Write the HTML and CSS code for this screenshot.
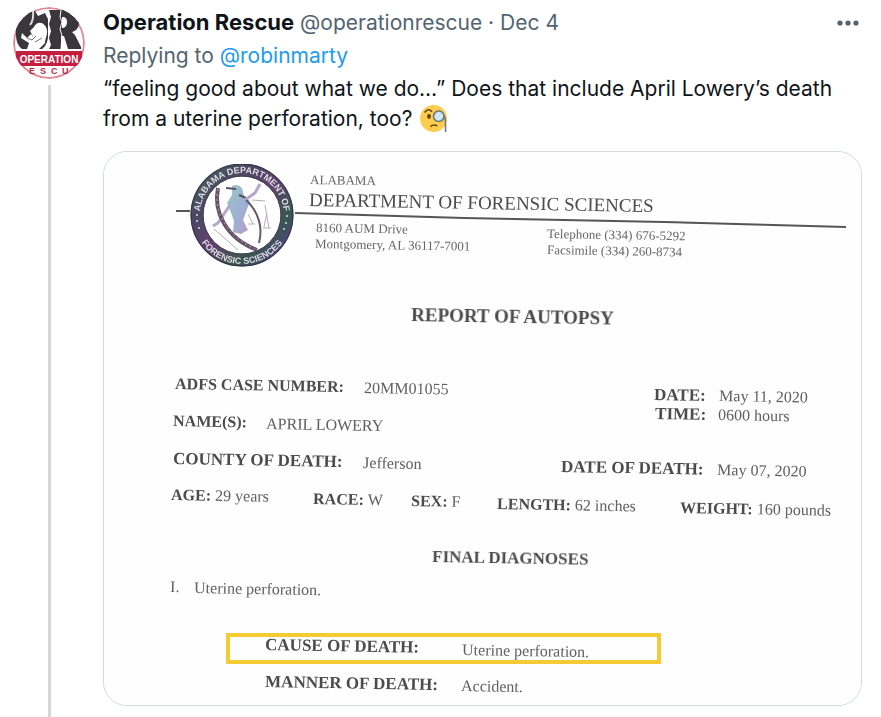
FILE: index.html
```html
<!DOCTYPE html>
<html lang="en">
<head>
<meta charset="utf-8">
<meta name="viewport" content="width=device-width, initial-scale=1">
<title>Operation Rescue</title>
<link rel="stylesheet" href="styles.css">
</head>
<body>
<article class="post">
  <div class="rail">
    <svg class="avatar" viewBox="0 0 72 72" aria-hidden="true">
      <defs><clipPath id="disc"><circle cx="36" cy="36" r="36"/></clipPath></defs>
      <g clip-path="url(#disc)">
        <rect width="72" height="72" fill="#fff"/>
        <circle cx="36" cy="36" r="35" fill="none" stroke="#e08a9a" stroke-width="2"/>
        <path d="M16 5C6 10 2 19 3 28C3 34 5 39 9 42H29C33 39 35 34 35 29V12L32 6L25 9L22 4Z" fill="#393739"/>
        <path d="M36 3H53C62 3 66 8 66 15C66 21 63 24 59 25L62 28L68 40V42H55L51 29H48V42H36L38 38L36 31L38 24L36 17L38 10Z" fill="#393739"/>
        <path d="M48 3L47 10L49 15L47 22L49 29L48 42" fill="none" stroke="#fff" stroke-width="1"/>
        <path d="M49 10H51Q54 11 54 15Q54 20 50 21H49Z" fill="#fff"/>
        <path d="M20 4Q21 13 17 18" fill="none" stroke="#ddd" stroke-width="2"/>
        <path d="M21 20C24 14 30 15 33 20C36 26 32 31 32 36L26 42H14L16 36L8 31L9 26L14 31L18 27L21 31L17 24Z" fill="#fff"/>
        <path d="M14 31L19 33L23 29M22 35L29 31" fill="none" stroke="#777" stroke-width="1"/>
        <rect x="3" y="44" width="66" height="15" fill="#c51f3f"/>
        <text class="logo-name" x="36" y="56" text-anchor="middle">OPERATION</text>
        <text class="logo-sub" x="16" y="67">E</text>
        <text class="logo-sub" x="27" y="67">S</text>
        <text class="logo-sub" x="38" y="67">C</text>
        <text class="logo-sub" x="49" y="67">U</text>
      </g>
    </svg>
    <div class="thread"></div>
  </div>
  <div class="content">
    <header class="head">
      <p class="byline"><a class="name" href="#">Operation Rescue</a> <a class="muted" href="#">@operationrescue</a> <span class="muted">·</span> <time class="muted">Dec 4</time></p>
      <button class="more" type="button" aria-label="More">
        <svg class="dots" viewBox="0 0 24 8" aria-hidden="true"><circle cx="4" cy="4" r="2.6"/><circle cx="12" cy="4" r="2.6"/><circle cx="20" cy="4" r="2.6"/></svg>
      </button>
    </header>
    <p class="reply">Replying to <a class="link" href="#">@robinmarty</a></p>
    <p class="message">“feeling good about what we do…” Does that include April Lowery’s death from a uterine perforation, too?
      <svg class="emoji" viewBox="0 0 36 36" aria-hidden="true">
        <circle cx="18" cy="18" r="18" fill="#ffcc4d"/>
        <path d="M6 10Q11 3 16 9" fill="none" stroke="#65471b" stroke-width="2"/>
        <ellipse cx="12" cy="15" rx="2.5" ry="3.5" fill="#664500"/>
        <path d="M14 29Q18 25 23 28" fill="none" stroke="#664500" stroke-width="2"/>
        <circle cx="25" cy="15" r="7" fill="#bdddf4" stroke="#66757f" stroke-width="2"/>
        <path d="M20 17L27 10M23 20L30 13" stroke="#e9f5fc" stroke-width="2"/>
        <path d="M32 14Q34 16 34 21V36" fill="none" stroke="#66757f" stroke-width="2"/>
      </svg>
    </p>
    <figure class="media">
      <svg class="scan" viewBox="0 0 757 553" role="img" aria-label="Report of Autopsy">
        <defs>
          <filter id="soft" x="0" y="0" width="1" height="1"><feGaussianBlur stdDeviation="0.5"/></filter>
          <linearGradient id="ring" x1="0" y1="0" x2="1" y2="1">
            <stop offset="0" stop-color="#476560"/><stop offset=".25" stop-color="#4b4764"/><stop offset=".5" stop-color="#634070"/><stop offset=".75" stop-color="#385750"/><stop offset="1" stop-color="#54408a"/>
          </linearGradient>
          <linearGradient id="figure" x1="0" y1="0" x2="1" y2="1">
            <stop offset="0" stop-color="#9bc8bd"/><stop offset=".5" stop-color="#9bb3d4"/><stop offset="1" stop-color="#b99cc9"/>
          </linearGradient>
          <path id="arc-top" d="M96 63A42 42 0 0 1 180 63"/>
          <path id="arc-bottom" d="M89 63A49 49 0 0 0 187 63"/>
        </defs>
        <rect width="757" height="553" fill="#fefefe"/>
        <g filter="url(#soft)">
          <path d="M72 59H86M191 61L360 66L560 70L742 75" fill="none" stroke="#555" stroke-width="2"/>
          <circle cx="138" cy="63" r="45" fill="#fff" stroke="url(#ring)" stroke-width="13"/>
          <circle cx="138" cy="63" r="51" fill="none" stroke="#343447" stroke-width="1"/>
          <circle cx="138" cy="63" r="39" fill="none" stroke="#47434f" stroke-width="1"/>
          <text class="ring-text"><textPath href="#arc-top" startOffset="50%" text-anchor="middle">ALABAMA DEPARTMENT OF</textPath></text>
          <text class="ring-text"><textPath href="#arc-bottom" startOffset="50%" text-anchor="middle">FORENSIC SCIENCES</textPath></text>
          <g fill="#ddd"><circle cx="93" cy="63" r="1"/><circle cx="93" cy="69" r="1"/><circle cx="95" cy="76" r="1"/><circle cx="183" cy="64" r="1"/><circle cx="182" cy="71" r="1"/><circle cx="180" cy="77" r="1"/></g>
          <path d="M128 34Q134 31 138 36L140 44L146 49L142 60L139 68L144 78L137 82L129 80L130 69L126 58L123 51L128 43Z" fill="url(#figure)"/>
          <path d="M122 36L132 37M135 43L142 46" stroke="#59525f" stroke-width="2"/>
          <path d="M126 53L114 71L109 74M141 48L151 41L156 32" fill="none" stroke="#b5a6cb" stroke-width="3"/>
          <path d="M114 36C109 60 122 86 153 98" fill="none" stroke="#665267" stroke-width="4"/>
          <path d="M114 37C109 60 123 84 151 97" fill="none" stroke="#b8a3b5" stroke-width="1" stroke-dasharray="2 3"/>
          <path d="M142 48C155 60 159 76 155 91" fill="none" stroke="#635b67" stroke-width="2"/>
          <path d="M110 77L134 98M148 48L161 49M161 53L165 76M160 75L163 61M144 62L149 72M144 72H151M159 76H167" fill="none" stroke="#b5adba" stroke-width="1"/>

          <text class="line address" x="206" y="32">ALABAMA</text>
          <text class="line agency" x="205" y="54">DEPARTMENT OF FORENSIC SCIENCES</text>
          <text class="line address" x="212" y="80">8160 AUM Drive</text>
          <text class="line address" x="211" y="96">Montgomery, AL 36117-7001</text>
          <text class="line address" x="443" y="86">Telephone (334) 676-5292</text>
          <text class="line address" x="443" y="102">Facsimile (334) 260-8734</text>

          <text class="line title" x="307" y="169">REPORT OF AUTOPSY</text>

          <text class="line label compact" x="71" y="237">ADFS CASE NUMBER:</text>
          <text class="line value" x="260" y="241">20MM01055</text>
          <text class="line label" x="550" y="248">DATE:</text>
          <text class="line value" x="615" y="249">May 11, 2020</text>
          <text class="line label" x="551" y="267">TIME:</text>
          <text class="line value" x="614" y="268">0600 hours</text>
          <text class="line label compact" x="69" y="274">NAME(S):</text>
          <text class="line value" x="162" y="277">APRIL LOWERY</text>
          <text class="line label" x="69" y="312">COUNTY OF DEATH:</text>
          <text class="line value" x="259" y="316">Jefferson</text>
          <text class="line label" x="457" y="320">DATE OF DEATH:</text>
          <text class="line value" x="613" y="323">May 07, 2020</text>
          <text class="line label compact" x="67" y="348">AGE: <tspan class="value">29 years</tspan></text>
          <text class="line label compact" x="209" y="352">RACE: <tspan class="value">W</tspan></text>
          <text class="line label compact" x="307" y="354">SEX: <tspan class="value">F</tspan></text>
          <text class="line label compact" x="393" y="357">LENGTH: <tspan class="value">62 inches</tspan></text>
          <text class="line label compact" x="576" y="361">WEIGHT: <tspan class="value">160 pounds</tspan></text>

          <text class="line label" x="328" y="410">FINAL DIAGNOSES</text>
          <text class="line value" x="66" y="440">I.</text>
          <text class="line value" x="90" y="441">Uterine perforation.</text>
          <text class="line label" x="161" y="498">CAUSE OF DEATH:</text>
          <text class="line value" x="358" y="503">Uterine perforation.</text>
          <text class="line label" x="161" y="535">MANNER OF DEATH:</text>
          <text class="line value" x="357" y="539">Accident.</text>
        </g>
        <rect x="124" y="483" width="431" height="27" fill="none" stroke="#f4cb32" stroke-width="4"/>
      </svg>
    </figure>
  </div>
</article>
</body>
</html>
```
FILE: styles.css
```css
* { box-sizing: border-box; }
body {
  margin: 0;
  background: #fff;
  color: #0f1419;
  font-family: Inter, "Liberation Sans", sans-serif;
  font-size: 21px;
  line-height: 30px;
}
p, figure { margin: 0; }
a { color: inherit; text-decoration: none; }
.post {
  display: flex;
  gap: 18px;
  min-height: 100vh;
  padding: 7px 19px 0 13px;
}
.rail {
  display: flex;
  flex: none;
  flex-direction: column;
  align-items: center;
  gap: 6px;
}
.avatar { display: block; width: 72px; height: 72px; }
.thread { flex: 1; width: 3px; background: #cfd9de; }
.content { flex: 1; min-width: 0; padding-bottom: 11px; }
.head { display: flex; justify-content: space-between; align-items: center; }
.name { font-size: 22px; font-weight: 700; }
.muted, .reply { color: #536471; }
.reply { margin-top: 3px; }
.link { color: #1d9bf0; }
.message { margin-top: 3px; }
.more { display: flex; padding: 0 2px 0 8px; border: 0; background: none; }
.dots { width: 24px; height: 8px; fill: #536471; }
.emoji { width: 27px; height: 27px; margin-left: 2px; vertical-align: -6px; }
.media {
  margin-top: 17px;
  overflow: hidden;
  border: 1px solid #cfd9de;
  border-radius: 24px;
}
.scan { display: block; width: 100%; height: auto; }
.scan text { font-family: "Liberation Serif", serif; fill: #4c4c4c; }
.scan .line {
  transform-box: fill-box;
  transform-origin: left bottom;
  transform: rotate(1deg);
}
.scan .address { font-size: 13px; fill: #666; }
.scan .agency { font-size: 19px; }
.scan .title { font-size: 19px; font-weight: 700; }
.scan .label { font-size: 17px; font-weight: 700; }
.scan .compact { font-size: 16px; }
.scan .value { font-size: 16px; font-weight: 400; fill: #606060; }
.scan .ring-text { font-family: "Liberation Sans", sans-serif; font-size: 9px; font-weight: 700; fill: #ddd; }
.logo-name { font-family: "Liberation Sans", sans-serif; font-size: 10px; font-weight: 700; fill: #fff; }
.logo-sub { font-family: "Liberation Sans", sans-serif; font-size: 9px; font-weight: 700; fill: #c51f3f; }
```
